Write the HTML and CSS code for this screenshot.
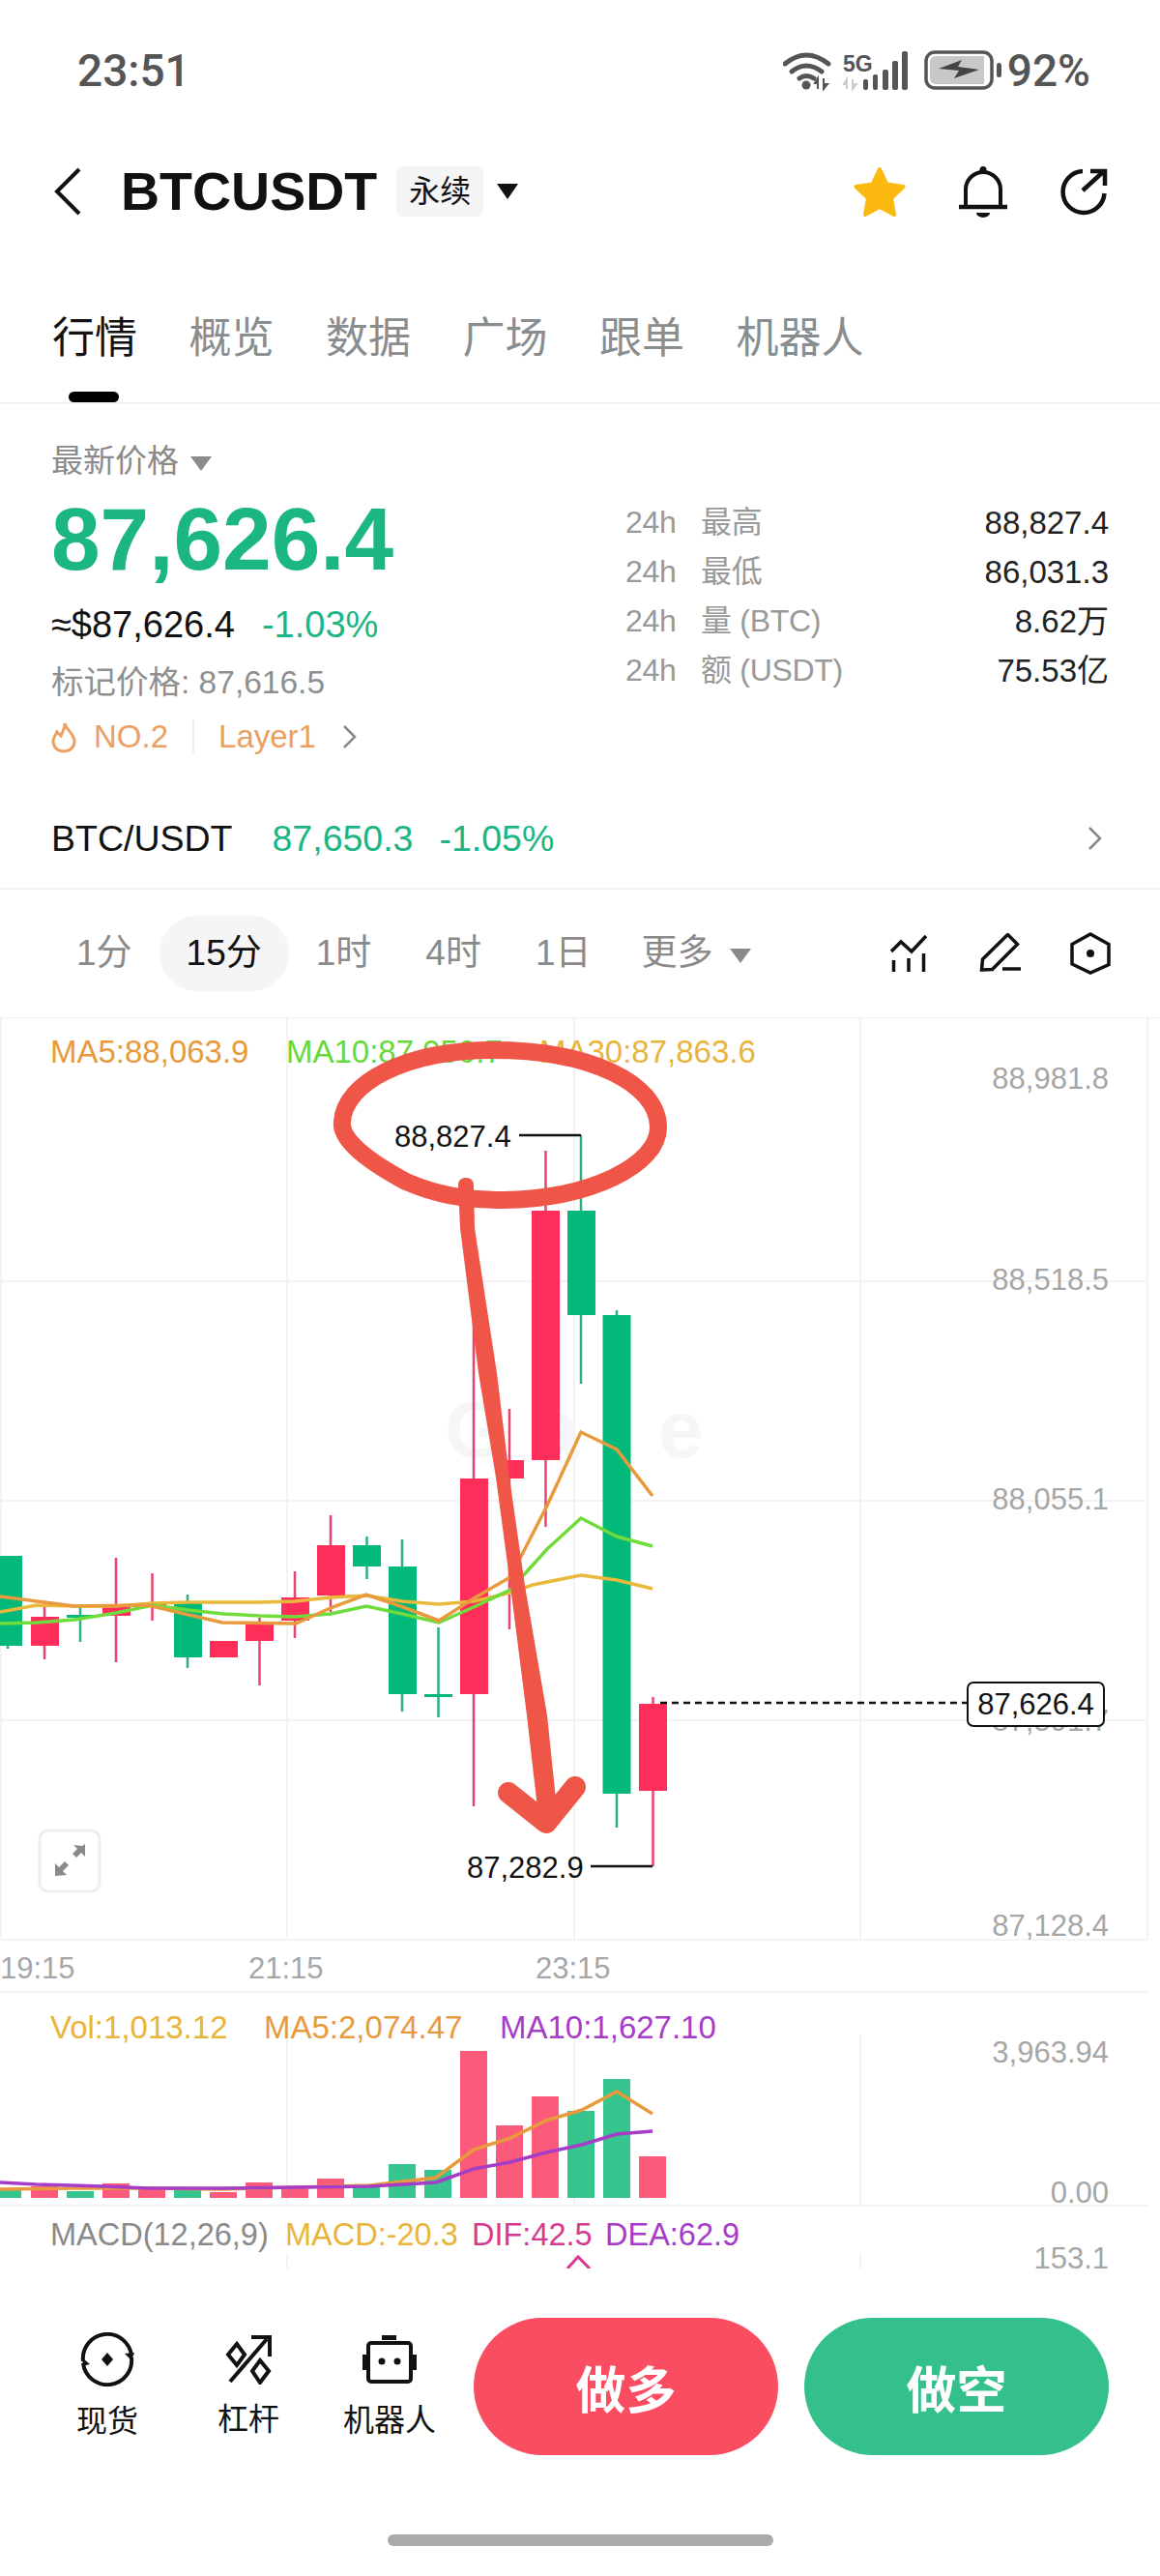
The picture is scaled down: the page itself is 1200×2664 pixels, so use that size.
FILE: index.html
```html
<!DOCTYPE html>
<html lang="zh-CN">

<head>
    <meta charset="utf-8">
    <meta name="viewport" content="width=device-width, initial-scale=1.0">
    <title>BTCUSDT 永续</title>
    <link rel="stylesheet" href="styles.css">
</head>

<body>
    <header class="status">
        <span class="status-time">23:51</span>
        <div class="status-icons">
            <svg class="status-signal" width="130" height="42" viewBox="809 52 130 42">
                <path d="M811 66 Q833 48 856 66" fill="none" stroke="#555" stroke-width="5" stroke-linecap="round"/>
                <path d="M818 74 Q833 62 849 74" fill="none" stroke="#555" stroke-width="5" stroke-linecap="round"/>
                <path d="M826 81 Q833 76 841 81" fill="none" stroke="#555" stroke-width="5" stroke-linecap="round"/>
                <circle cx="833" cy="88" r="4.5" fill="#555"/>
                <path d="M845 92V81l-3 5h3M851 81v11l4-5h-4" fill="#555" stroke="#555" stroke-width="2"/>
                <text class="status-5g" x="871" y="74">5G</text>
                <path d="M875 92V82l-3 5h3M881 82v10l4-5h-4" fill="#ccc" stroke="#ccc" stroke-width="2"/>
                <rect x="892" y="82" width="5" height="11" rx="2" fill="#555"/>
                <rect x="902" y="77" width="5" height="16" rx="2" fill="#555"/>
                <rect x="912" y="72" width="6" height="21" rx="2" fill="#555"/>
                <rect x="922" y="63" width="6" height="30" rx="2" fill="#555"/>
                <rect x="932" y="53" width="6" height="40" rx="2" fill="#555"/>
            </svg>
            <svg class="status-battery" width="82" height="42" viewBox="955 52 82 42">
                <rect x="957" y="54" width="68" height="37" rx="9" fill="#fff" stroke="#555" stroke-width="3.5"/>
                <path d="M961 64a6 6 0 0 1 6-6h50v29h-50a6 6 0 0 1-6-6z" fill="#c8c8c8"/>
                <path d="M970 71l24-9-4 7 22 3-26 9 5-8z" fill="#444"/>
                <rect x="1030" y="65" width="5" height="15" rx="2.5" fill="#555"/>
            </svg>
            <span class="status-batt">92%</span>
        </div>
    </header>

    <nav class="topbar">
        <svg class="back" width="32" height="50" viewBox="0 0 32 50">
            <path d="M28 2L5 25l23 23" fill="none" stroke="#111" stroke-width="4"/>
        </svg>
        <h1 class="pair">BTCUSDT</h1>
        <span class="pair-tag">永续</span>
        <span class="caret caret-dark"></span>
        <div class="topbar-icons">
            <svg width="56" height="54" viewBox="0 0 56 54">
                <path d="M28 4l7.500 15.500 17 2.500-12.500 12 3 17-15-8-15 8 3-17-12.500-12 17-2.500z" fill="#fcb90f" stroke="#fcb90f" stroke-width="4" stroke-linejoin="round"/>
            </svg>
            <svg width="50" height="54" viewBox="0 0 50 54">
                <path d="M7 42V25a18 18 0 0 1 36 0v17" fill="none" stroke="#111" stroke-width="4"/>
                <path d="M0 43h50" stroke="#111" stroke-width="4.500"/>
                <circle cx="25" cy="4.500" r="3.500" fill="#111"/>
                <path d="M18 49h14a7 5 0 0 1-14 0z" fill="#111"/>
            </svg>
            <svg width="50" height="50" viewBox="0 0 50 50">
                <path d="M24 4A21.500 21.500 0 1 0 46.500 27" fill="none" stroke="#111" stroke-width="4.500"/>
                <path d="M24 24L46 4M32 4h15v15" fill="none" stroke="#111" stroke-width="4.500"/>
            </svg>
        </div>
    </nav>

    <div class="tabs">
        <a class="tab tab-on">行情</a>
        <a class="tab">概览</a>
        <a class="tab">数据</a>
        <a class="tab">广场</a>
        <a class="tab">跟单</a>
        <a class="tab">机器人</a>
    </div>

    <section class="price">
        <div class="price-main">
            <div class="price-label">最新价格 <span class="caret caret-gray"></span></div>
            <div class="price-big">87,626.4</div>
            <div class="price-sub"><span>≈$87,626.4</span><span class="green">-1.03%</span></div>
            <div class="price-mark">标记价格: 87,616.5</div>
            <div class="price-tags">
                <svg width="26" height="34" viewBox="0 0 26 34">
                    <path d="M14 3c1 7 10 10 10 19a11 10 0 0 1-22 0c0-5 3-7 4-10 2 2 3 3 4 4 2-4 4-8 4-13z" fill="none" stroke="#eba062" stroke-width="3"/>
                </svg>
                <span class="tag-no">NO.2</span>
                <span class="tag-line"></span>
                <span>Layer1</span>
                <svg class="chev" width="16" height="26" viewBox="0 0 16 26">
                    <path d="M2 2l11 11L2 24" fill="none" stroke="#888" stroke-width="2.500"/>
                </svg>
            </div>
        </div>
        <dl class="stats">
            <div class="stat"><dt><i>24h</i>最高</dt><dd>88,827.4</dd></div>
            <div class="stat"><dt><i>24h</i>最低</dt><dd>86,031.3</dd></div>
            <div class="stat"><dt><i>24h</i>量 (BTC)</dt><dd>8.62万</dd></div>
            <div class="stat"><dt><i>24h</i>额 (USDT)</dt><dd>75.53亿</dd></div>
        </dl>
    </section>

    <div class="spot">
        <span class="spot-name">BTC/USDT</span>
        <span class="green spot-last">87,650.3</span>
        <span class="green">-1.05%</span>
        <svg class="spot-chev" width="16" height="26" viewBox="0 0 16 26">
            <path d="M2 2l11 11L2 24" fill="none" stroke="#888" stroke-width="2.500"/>
        </svg>
    </div>

    <div class="periods">
        <a class="period">1分</a>
        <a class="period period-on">15分</a>
        <a class="period">1时</a>
        <a class="period">4时</a>
        <a class="period">1日</a>
        <a class="period period-more">更多 <span class="caret caret-gray"></span></a>
        <div class="period-tools">
            <svg width="40" height="42" viewBox="920 966 40 42">
                <path d="M922 985l10-10 11 10 15-16" fill="none" stroke="#111" stroke-width="3.500"/>
                <path d="M924.500 994v12M940 992v14M955.500 987v19" stroke="#111" stroke-width="3.500"/>
            </svg>
            <svg width="44" height="42" viewBox="1013 964 44 42">
                <path d="M1015.500 1002l1-11 26-25.500 10 10-26 26z" fill="none" stroke="#111" stroke-width="3.500"/>
                <path d="M1037 1001h19" stroke="#111" stroke-width="3.500"/>
            </svg>
            <svg width="44" height="46" viewBox="1106 963 44 46">
                <path d="M1128 966l19 10.500v21L1128 1006l-19-9v-20.500z" fill="none" stroke="#111" stroke-width="3.500"/>
                <circle cx="1128" cy="986" r="4" fill="#111"/>
            </svg>
        </div>
    </div>

    <!-- chart canvas: coordinates are page pixels -->
    <svg class="chart" width="1200" height="1294" viewBox="0 1052 1200 1294">
        <g class="grid">
            <path d="M0 1052h1200M0 1325h1187M0 1552h1187M0 1779h1187M0 2006h1187M0 2060h1187M0 2281h1187"/>
            <path d="M1 1052v954M297 1052v954M594 1052v954M890 1052v954M1187 1052v954"/>
            <path d="M297 2105v176M594 2105v176M890 2105v176M297 2330v16M594 2330v16M890 2330v16"/>
        </g>

        <text class="watermark" x="460" y="1507">Gate</text>

        <g class="ax">
            <text x="1147" y="1126">88,981.8</text>
            <text x="1147" y="1334">88,518.5</text>
            <text x="1147" y="1561">88,055.1</text>
            <text x="1147" y="1790">87,591.7</text>
            <text x="1147" y="2002">87,128.4</text>
            <text x="1147" y="2133">3,963.94</text>
            <text x="1147" y="2278">0.00</text>
            <text x="1147" y="2346">153.1</text>
        </g>
        <g class="ax-time">
            <text x="0" y="2046">19:15</text>
            <text x="257" y="2046">21:15</text>
            <text x="554" y="2046">23:15</text>
        </g>

        <g class="legend">
            <text x="52" y="1099" fill="#e89a3c">MA5:88,063.9</text>
            <text x="296" y="1099" fill="#66d93a">MA10:87,950.7</text>
            <text x="558" y="1099" fill="#e8b53a">MA30:87,863.6</text>
            <text x="52" y="2108" fill="#e8b53a">Vol:1,013.12</text>
            <text x="273" y="2108" fill="#e89a3c">MA5:2,074.47</text>
            <text x="517" y="2108" fill="#a63cc8">MA10:1,627.10</text>
        </g>
        <g class="legend legend-macd">
            <text x="52" y="2322" fill="#8a8a8a">MACD(12,26,9)</text>
            <text x="295" y="2322" fill="#e8b53a">MACD:-20.3</text>
            <text x="488" y="2322" fill="#d83a90">DIF:42.5</text>
            <text x="626" y="2322" fill="#a63cc8">DEA:62.9</text>
        </g>

        <g class="wick-up">
            <path d="M8 1700v5M83 1662v36M194 1649v76M379.500 1589v44M416 1592v178M453.500 1683v93M601 1174v257M638 1355v535"/>
        </g>
        <g class="wick-down">
            <path d="M46 1656v60M120 1611v108M157.500 1627v49M268.500 1673v70M305 1625v69M342 1567v100M490 1355v513M527 1457v228M564.500 1190v389M675.500 1755v175"/>
        </g>
        <g class="up">
            <rect x="-6" y="1609" width="29" height="93"/>
            <rect x="69" y="1670" width="29" height="3"/>
            <rect x="180" y="1658" width="29" height="56"/>
            <rect x="365" y="1598" width="29" height="22"/>
            <rect x="402" y="1620" width="29" height="132"/>
            <rect x="439" y="1752" width="29" height="3"/>
            <rect x="587" y="1252" width="29" height="108"/>
            <rect x="623.500" y="1360" width="29" height="495"/>
        </g>
        <g class="down">
            <rect x="32" y="1672" width="29" height="30"/>
            <rect x="106" y="1661" width="29" height="10"/>
            <rect x="143" y="1658" width="29" height="3"/>
            <rect x="217" y="1697" width="29" height="17"/>
            <rect x="254" y="1678" width="29" height="19"/>
            <rect x="291" y="1652" width="29" height="24"/>
            <rect x="328" y="1598" width="29" height="52"/>
            <rect x="476" y="1529" width="29" height="223"/>
            <rect x="513" y="1510" width="29" height="19"/>
            <rect x="550" y="1252" width="29" height="258"/>
            <rect x="661" y="1762" width="29" height="90"/>
        </g>

        <polyline class="ma ma30" points="0,1667 38,1660 77,1661 120,1661 158,1658 194,1657 231,1657 269,1657 305,1656 342,1652 379,1650 416,1656 454,1659 490,1656 528,1647 551,1639 601,1629 638,1634 675,1643"/>
        <polyline class="ma ma10" points="0,1679 38,1678 77,1675 120,1668 158,1660 194,1665 231,1669 269,1671 305,1672 342,1669 379,1661 416,1669 454,1678 490,1662 528,1644 566,1602 601,1570 638,1589 675,1599"/>
        <polyline class="ma ma5" points="0,1651 77,1661 153,1660 191,1669 230,1678 306,1679 344,1662 379,1649 417,1662 454,1676 490,1653 528,1631 566,1557 601,1481 638,1499 675,1547"/>

        <g class="vol-up">
            <rect x="-6" y="2264" width="28" height="9"/>
            <rect x="69" y="2266" width="28" height="7"/>
            <rect x="180" y="2265" width="28" height="8"/>
            <rect x="365" y="2261" width="28" height="12"/>
            <rect x="402" y="2238" width="28" height="35"/>
            <rect x="439" y="2244" width="28" height="29"/>
            <rect x="587" y="2183" width="28" height="90"/>
            <rect x="624" y="2150" width="28" height="123"/>
        </g>
        <g class="vol-down">
            <rect x="32" y="2261" width="28" height="12"/>
            <rect x="106" y="2258" width="28" height="15"/>
            <rect x="143" y="2263" width="28" height="10"/>
            <rect x="217" y="2267" width="28" height="6"/>
            <rect x="254" y="2257" width="28" height="16"/>
            <rect x="291" y="2261" width="28" height="12"/>
            <rect x="328" y="2253" width="28" height="20"/>
            <rect x="476" y="2121" width="28" height="152"/>
            <rect x="513" y="2198" width="28" height="75"/>
            <rect x="550" y="2168" width="28" height="105"/>
            <rect x="661" y="2230" width="28" height="43"/>
        </g>
        <polyline class="ma ma5" points="0,2264 77,2263 153,2263 230,2264 306,2262 383,2260 451,2252 490,2223 528,2211 565,2193 602,2182 638,2163 675,2186"/>
        <polyline class="ma ma-purple" points="0,2257 38,2259 107,2261 153,2263 230,2263 306,2262 383,2261 451,2257 490,2243 528,2236 565,2226 602,2218 638,2207 675,2204"/>
        <path d="M587 2346l11-12 12 12" fill="none" stroke="#d83a90" stroke-width="3"/>

        <g class="mark">
            <text x="408" y="1186">88,827.4</text>
            <path d="M537 1174h64"/>
            <text x="483" y="1942">87,282.9</text>
            <path d="M611 1930h64"/>
        </g>

        <path class="last-line" d="M683 1761h318"/>
        <rect class="last-box" x="1001" y="1740" width="141" height="45" rx="6"/>
        <text class="last-text" x="1071.500" y="1773" text-anchor="middle">87,626.4</text>

        <rect class="expand" x="41" y="1893" width="62" height="63" rx="9"/>
        <path class="expand-ico" d="M85 1909l3-2v13l-4-4-5 5-4-4 5-5-4-4zM57 1940l0-13 4 4 6-6 4 4-6 6 4 4z"/>

        <g class="scribble">
            <path d="M420 1222C370 1195 352 1175 354 1160C356 1120 420 1086 510 1086C610 1086 680 1120 681 1165C682 1205 610 1240 520 1241C480 1241 450 1235 420 1222Z"/>
            <path class="scribble-shaft" d="M474 1226Q474 1218 482 1218Q490 1218 490 1226L491 1270L514 1420L527 1528L543 1640L566 1774L576 1870L556 1870L545 1774L528 1640L513 1528L495 1420L476 1270Z"/>
            <path class="scribble-head" d="M526 1854L565 1885L595 1848"/>
        </g>
    </svg>

    <footer class="actions">
        <div class="act">
            <svg width="56" height="56" viewBox="0 0 56 56">
                <path d="M3 30A25 25 0 0 1 53 24M53 26A25 25 0 0 1 3 32" fill="none" stroke="#111" stroke-width="4"/>
                <path d="M46 22l7 7 3-8zM3 27l7 6-8 2z" fill="#111"/>
                <path d="M28 21l6 7-6 7-6-7z" fill="#111"/>
            </svg>
            <span>现货</span>
        </div>
        <div class="act">
            <svg width="50" height="52" viewBox="0 0 50 52">
                <path d="M6 49L44 5" fill="none" stroke="#111" stroke-width="4"/>
                <path d="M28 3h19v20" fill="none" stroke="#111" stroke-width="4"/>
                <path d="M13 10l8 11-8 11-9-11zM37 27l9 11-9 12-8-12z" fill="none" stroke="#111" stroke-width="4"/>
            </svg>
            <span>杠杆</span>
        </div>
        <div class="act">
            <svg width="56" height="54" viewBox="0 0 56 54">
                <rect x="20" y="2" width="15" height="5" fill="#111"/>
                <rect x="6" y="10" width="44" height="40" rx="3" fill="none" stroke="#111" stroke-width="4"/>
                <path d="M2 22v16M54 22v16" stroke="#111" stroke-width="4"/>
                <circle cx="20" cy="29" r="3.500" fill="#111"/>
                <circle cx="36" cy="29" r="3.500" fill="#111"/>
            </svg>
            <span>机器人</span>
        </div>
        <button class="trade trade-long">做多</button>
        <button class="trade trade-short">做空</button>
    </footer>

    <div class="home-row"><span class="home-bar"></span></div>
</body>

</html>
```

FILE: styles.css
```css
body {
    margin: 0;
    width: 1200px;
    background: #fff;
    color: #111;
    font-family: "Liberation Sans", "Noto Sans CJK SC", sans-serif;
    overflow-x: hidden;
}

.green {
    color: #1cb584;
}

.caret {
    display: inline-block;
    width: 0;
    height: 0;
    border-left: 11px solid transparent;
    border-right: 11px solid transparent;
    border-top: 16px solid #111;
    vertical-align: middle;
}

.caret-gray {
    margin-left: 3px;
    border-left-width: 11px;
    border-right-width: 11px;
    border-top: 15px solid #8a8a8a;
}

/* status */
.status {
    height: 146px;
    display: flex;
    align-items: center;
    justify-content: space-between;
    padding: 0 72px 0 80px;
    color: #555;
    font-family: Roboto, sans-serif;
    font-weight: 500;
}

.status-time {
    font-size: 46px;
}

.status-batt {
    font-size: 46px;
    margin-left: -13px;
}

.status-icons {
    display: flex;
    align-items: center;
    gap: 17px;
}

.status-icons svg {
    display: block;
}

.status-5g {
    font-size: 23px;
    font-weight: 700;
    fill: #555;
    font-family: "Liberation Sans", sans-serif;
}

.status-battery {
    margin-left: -1px;
}

/* top bar */
.topbar {
    height: 104px;
    display: flex;
    align-items: center;
    padding: 0 54px;
}

.back {
    margin-right: 39px;
}

.pair {
    margin: 0 20px 0 0;
    font-size: 55.5px;
    font-weight: 700;
    line-height: 64px;
}

.pair-tag {
    width: 90px;
    height: 52px;
    line-height: 52px;
    text-align: center;
    background: #f5f5f5;
    border-radius: 6px;
    font-size: 32px;
    margin-right: 14px;
}

.topbar-icons {
    margin-left: auto;
    display: flex;
    align-items: center;
    gap: 54px;
}

.topbar-icons svg {
    display: block;
}

/* tabs */
.tabs {
    height: 166px;
    display: flex;
    gap: 53.5px;
    padding: 0 54px;
    border-bottom: 2px solid #f2f2f2;
    box-sizing: content-box;
}

.tab {
    position: relative;
    margin-top: 68px;
    font-size: 44px;
    line-height: 64px;
    color: #888d8f;
}

.tab-on {
    color: #111;
}

.tab-on::after {
    content: "";
    position: absolute;
    left: 17px;
    top: 87px;
    width: 52px;
    height: 11px;
    border-radius: 6px;
    background: #000;
}

/* price block */
.price {
    height: 398px;
    display: flex;
    justify-content: space-between;
    padding: 0 53px;
}

.price-main {
    padding-top: 39px;
}

.price-label {
    font-size: 33px;
    line-height: 40px;
    color: #8a8a8a;
}

.price-big {
    margin-top: 11px;
    font-size: 91px;
    font-weight: 700;
    line-height: 100px;
    color: #1cb584;
}

.price-sub {
    margin-top: 18px;
    display: flex;
    gap: 28px;
    font-size: 38px;
    line-height: 40px;
}

.price-mark {
    margin-top: 20px;
    font-size: 33.5px;
    line-height: 40px;
    color: #8f8f8f;
}

.price-tags {
    margin-top: 16px;
    display: flex;
    align-items: center;
    font-size: 33px;
    line-height: 40px;
    color: #eba062;
}

.tag-no {
    margin-left: 18px;
}

.tag-line {
    width: 2px;
    height: 36px;
    margin: 0 25px;
    background: #f0f0f0;
}

.chev {
    margin-left: 27px;
}

.stats {
    width: 500px;
    margin: 0;
    padding-top: 97px;
    font-size: 32px;
}

.stat {
    height: 51px;
    display: flex;
    align-items: center;
    justify-content: space-between;
    line-height: 51px;
}

.stat dt {
    color: #999;
    letter-spacing: -0.3px;
}

.stat dt i {
    font-style: normal;
    display: inline-block;
    width: 78px;
}

.stat dd {
    margin: 0;
    font-size: 33px;
    color: #222;
}

/* spot row */
.spot {
    height: 104px;
    display: flex;
    align-items: center;
    padding: 0 53px;
    font-size: 37.5px;
    border-bottom: 2px solid #f2f2f2;
    box-sizing: border-box;
    gap: 27px;
}

.spot-last {
    margin-left: 14px;
}

.spot-chev {
    margin-left: auto;
    margin-right: 6px;
}

/* timeframes */
.periods {
    height: 132px;
    display: flex;
    align-items: center;
    padding: 0 50px 0 51px;
    font-size: 37px;
    color: #8a8a8a;
}

.period {
    padding: 0 28px;
    line-height: 78px;
    border-radius: 39px;
    white-space: nowrap;
}

.period .caret-gray {
    margin-left: 7px;
}

.period-more {
    margin-left: -4px;
}

.period-on {
    color: #111;
    background: #f5f5f5;
}

.period-tools {
    margin-left: auto;
    display: flex;
    align-items: center;
    gap: 49px;
}

.period-tools svg {
    display: block;
}

.period-tools svg:first-child {
    margin-right: 4px;
}

/* chart */
.chart {
    display: block;
}

.grid path {
    fill: none;
    stroke: #f3f3f3;
    stroke-width: 2;
}

.ax text {
    font-size: 31px;
    fill: #a6a6a6;
    text-anchor: end;
}

.ax-time text {
    font-size: 31px;
    fill: #a6a6a6;
}

.legend text {
    font-size: 33px;
}

.legend-macd text {
    font-size: 32.5px;
}

.watermark {
    font-size: 84px;
    font-weight: 700;
    letter-spacing: 27px;
    fill: #f5f6f6;
}

.wick-up path {
    fill: none;
    stroke: #2fae80;
    stroke-width: 2.500;
}

.wick-down path {
    fill: none;
    stroke: #e8436e;
    stroke-width: 2.500;
}

.up rect {
    fill: #02b97a;
}

.down rect {
    fill: #ff2d5a;
}

.vol-up rect {
    fill: #36c48f;
}

.vol-down rect {
    fill: #fb5a7b;
}

.ma {
    fill: none;
    stroke-width: 3.500;
}

.ma5 {
    stroke: #e89a3c;
}

.ma10 {
    stroke: #6fdc3c;
}

.ma30 {
    stroke: #eab83a;
}

.ma-purple {
    stroke: #a63cc8;
}

.mark text {
    font-size: 31px;
    fill: #111;
}

.mark path {
    fill: none;
    stroke: #111;
    stroke-width: 2.500;
}

.last-line {
    fill: none;
    stroke: #111;
    stroke-width: 2.500;
    stroke-dasharray: 7 5;
}

.last-box {
    fill: #fff;
    stroke: #111;
    stroke-width: 2;
}

.last-text {
    font-size: 31px;
    fill: #111;
}

.expand {
    fill: #fff;
    stroke: #eeeeee;
    stroke-width: 3;
}

.expand-ico {
    fill: #8a8a8a;
}

.scribble path {
    fill: none;
    stroke: #ef5648;
    stroke-width: 18;
    stroke-linecap: round;
    stroke-linejoin: round;
}

.scribble .scribble-shaft {
    fill: #ef5648;
    stroke: none;
}

.scribble .scribble-head {
    stroke-width: 22;
}

/* bottom actions */
.actions {
    height: 244px;
    display: flex;
    align-items: center;
    padding: 0 53px 0 0;
    box-sizing: border-box;
}

.act {
    width: 146px;
    display: flex;
    flex-direction: column;
    align-items: center;
    gap: 16px;
    font-size: 32px;
    line-height: 40px;
    color: #111;
}

.act svg {
    display: block;
}

.act:first-child {
    margin-left: 38px;
}

.trade {
    width: 315px;
    height: 142px;
    border: 0;
    border-radius: 71px;
    color: #fff;
    font-family: inherit;
    font-size: 52px;
    font-weight: 700;
}

.trade-long {
    margin-left: 14px;
    background: #fb4d62;
}

.trade-short {
    margin-left: 27px;
    background: #34c08a;
}

.home-row {
    height: 74px;
    display: flex;
    justify-content: center;
    align-items: flex-start;
    padding-top: 31px;
    box-sizing: border-box;
}

.home-bar {
    width: 399px;
    height: 12px;
    border-radius: 6px;
    background: #aaaaaa;
}
```
